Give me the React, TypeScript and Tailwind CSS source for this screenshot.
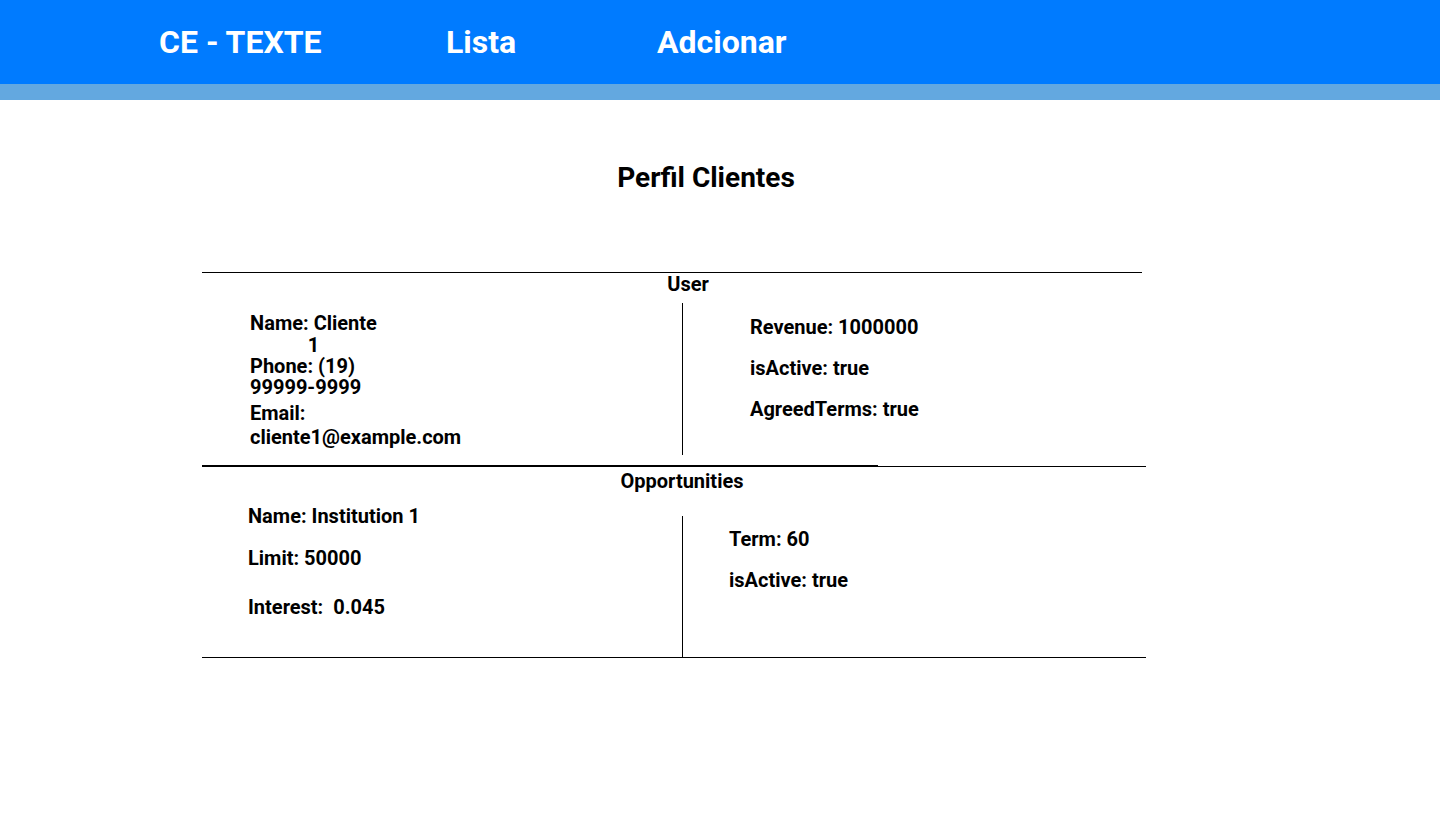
const font = { fontFamily: "Roboto, 'Liberation Sans', sans-serif" };

function Header() {
  return (
    <header>
      <nav className="h-[84px] bg-[#007bff] flex items-center pl-[159px] text-white font-bold text-[32px] leading-[32px]">
        <span className="w-[287px]">CE - TEXTE</span>
        <span className="w-[211px]">Lista</span>
        <span>Adcionar</span>
      </nav>
      <div className="h-4 bg-[#63a8e0]" />
    </header>
  );
}

function UserSection() {
  return (
    <section className="w-[940px] border-t border-black">
      <h4 className="text-center text-[20px] leading-[22px] font-bold pl-[32px]">User</h4>
      <div className="flex mt-[8px] pb-[10px]">
        <div className="w-[480px] pl-[48px] pt-[9px] text-[20px] font-bold">
          <p className="w-[127px] text-center leading-[22px]">Name: Cliente 1</p>
          <p className="w-[127px] leading-[21px]">Phone: (19) 99999-9999</p>
          <p className="w-[127px] leading-[24px] mt-[3px]">Email: cliente1@example.com</p>
        </div>
        <div className="w-px h-[152px] bg-black" />
        <div className="pl-[67px] pt-[13px] text-[20px] font-bold leading-[22px] flex flex-col gap-[19px]">
          <p>Revenue: 1000000</p>
          <p>isActive: true</p>
          <p>AgreedTerms: true</p>
        </div>
      </div>
    </section>
  );
}

function Divider() {
  return (
    <div className="w-[944px] h-[2px] flex items-center">
      <div className="w-[676px] h-[2px] bg-black" />
      <div className="flex-1 h-px bg-black" />
    </div>
  );
}

function OpportunitiesSection() {
  return (
    <section className="w-[944px] border-b border-black">
      <h4 className="text-center text-[20px] leading-[22px] font-bold mt-[3px] pl-[16px]">
        Opportunities
      </h4>
      <div className="flex mt-[11px]">
        <div className="w-[480px] pl-[46px] pt-[2px] text-[20px] font-bold leading-[22px] flex flex-col">
          <p>Name: Institution 1</p>
          <p className="mt-[20px]">Limit: 50000</p>
          <p className="mt-[27px] whitespace-pre">Interest:  0.045</p>
        </div>
        <div className="w-px h-[141px] mt-[13px] bg-black" />
        <div className="pl-[46px] pt-[25px] text-[20px] font-bold leading-[22px] flex flex-col gap-[19px]">
          <p>Term: 60</p>
          <p>isActive: true</p>
        </div>
      </div>
    </section>
  );
}

export default function App() {
  return (
    <div className="min-h-[831px] bg-white text-black" style={font}>
      <Header />
      <main>
        <h2 className="mt-[61px] pr-[28px] text-center text-[28px] font-bold leading-[33px]">
          Perfil Clientes
        </h2>
        <div className="ml-[202px] mt-[78px] flex flex-col">
          <UserSection />
          <Divider />
          <OpportunitiesSection />
        </div>
      </main>
    </div>
  );
}
